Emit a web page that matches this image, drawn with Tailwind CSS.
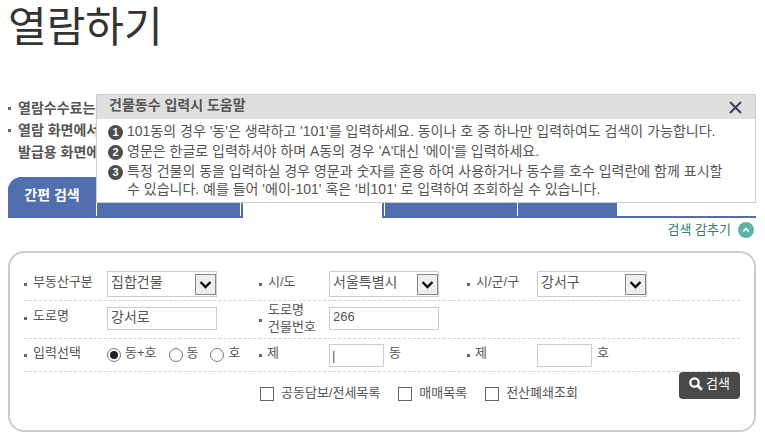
<!DOCTYPE html>
<html lang="ko">
  <head>
    <meta charset="UTF-8" />
    <meta name="viewport" content="width=device-width, initial-scale=1.0" />
    <script src="https://cdn.jsdelivr.net/npm/@tailwindcss/browser@4"></script>
    <title>열람하기</title>
  </head>
  <body
    class="bg-white pl-2 pr-[9px] pb-2 font-['Liberation_Sans','Noto_Sans_CJK_KR',sans-serif] text-[13px] leading-[18px] text-[#555]"
  >
    <h1 class="pt-[6px] text-[42px] leading-[44px] font-normal text-[#333]">열람하기</h1>

    <!-- Notice + tabs, with the help layer on top -->
    <section class="relative mt-11">
      <ul class="pt-[3px] text-[14px] leading-[22px] font-bold whitespace-nowrap">
        <li class="flex items-center gap-[7px]">
          <span class="size-[3px] bg-[#666]"></span>열람수수료는
        </li>
        <li class="flex items-center gap-[7px]">
          <span class="size-[3px] bg-[#666]"></span>열람 화면에서
        </li>
        <li class="pl-[10px]">발급용 화면에</li>
      </ul>

      <nav class="mt-[14px] flex h-[41px]">
        <div class="flex border-b-2 border-[#516fae] bg-[#516fae] rounded-tl-[14px]">
          <button class="w-[88px] rounded-t-[14px] bg-[#516fae] pb-1 text-[14px] font-bold text-white">
            간편 검색
          </button>
          <button class="w-[147px] border-l border-white" aria-label="소재지번으로 찾기">
            <span class="ml-auto mr-[2px] block h-full w-px bg-white"></span>
          </button>
        </div>
        <button class="w-[139px] bg-white" aria-label="도로명주소로 찾기"></button>
        <div class="flex flex-1 border-b-2 border-[#516fae]">
          <button class="w-[135px] bg-[#516fae] pl-[2px]" aria-label="고유번호로 찾기">
            <span class="block h-full w-px bg-white"></span>
          </button>
          <button class="w-[100px] border-l border-white bg-[#516fae]" aria-label="지도로 찾기"></button>
        </div>
      </nav>

      <!-- Help layer -->
      <div class="absolute top-0 right-0 left-[88px] border border-[#ccc] bg-white">
        <div class="flex h-6 items-center justify-between bg-[#dfdfdf] pr-[13px] pl-3">
          <h2 class="pb-1 text-[14px] font-bold">건물동수 입력시 도움말</h2>
          <button aria-label="닫기">
            <svg class="size-[13px]" viewBox="0 0 13 13" fill="none" stroke="#454358" stroke-width="2.2">
              <path d="M1 1 L12 12 M12 1 L1 12" />
            </svg>
          </button>
        </div>
        <ol class="flex flex-col gap-[2px] pt-[3px] pr-2 pb-[4px] pl-[11px] text-[14px] leading-[18px]">
          <li class="flex gap-[4px]">
            <span class="mt-[3px] size-[15px] shrink-0 rounded-full bg-[#4d4d4d] text-center text-[11px] leading-[15px] font-bold text-white">1</span>
            <p>101동의 경우 '동'은 생략하고 '101'를 입력하세요. 동이나 호 중 하나만 입력하여도 검색이 가능합니다.</p>
          </li>
          <li class="flex gap-[4px]">
            <span class="mt-[3px] size-[15px] shrink-0 rounded-full bg-[#4d4d4d] text-center text-[11px] leading-[15px] font-bold text-white">2</span>
            <p>영문은 한글로 입력하셔야 하며 A동의 경우 'A'대신 '에이'를 입력하세요.</p>
          </li>
          <li class="flex gap-[4px]">
            <span class="mt-[3px] size-[15px] shrink-0 rounded-full bg-[#4d4d4d] text-center text-[11px] leading-[15px] font-bold text-white">3</span>
            <p>
              특정 건물의 동을 입력하실 경우 영문과 숫자를 혼용 하여 사용하거나 동수를 호수 입력란에 함께 표시할<br />
              수 있습니다. 예를 들어 '에이-101' 혹은 '비101' 로 입력하여 조회하실 수 있습니다.
            </p>
          </li>
        </ol>
      </div>
    </section>

    <div class="flex justify-end pt-[3px] pr-[2px]">
      <button class="flex items-center gap-[7px] text-[#35806c]">
        검색 감추기
        <svg class="size-4" viewBox="0 0 16 16">
          <circle cx="8" cy="8" r="8" fill="#5cb3a6" />
          <path d="M5.2 9.3 L8 6.6 L10.8 9.3" fill="none" stroke="#fff" stroke-width="1.6" />
        </svg>
      </button>
    </div>

    <!-- Search form -->
    <form class="mt-3 rounded-2xl border-2 border-[#ccc] px-[14px] pt-[18px] pb-7">
      <div class="grid grid-cols-[83px_152px_70px_138px_70px_1fr] border-b border-dashed border-[#d5d5d5] pb-[3px]">
        <label for="kind" class="flex h-[22px] items-center gap-[6px]">
          <span class="mt-1 size-[3px] bg-[#666]"></span>부동산구분
        </label>
        <div class="relative w-[110px]">
          <select id="kind" class="block h-[26px] w-full appearance-none border border-[#ccc] bg-white pb-[4px] pl-[3px] text-[14px]">
            <option>집합건물</option>
          </select>
          <svg class="pointer-events-none absolute top-[3px] right-0 h-[21px] w-[22px]" viewBox="0 0 22 21">
            <rect x="0.5" y="0.5" width="20" height="20" fill="#eee" stroke="#888" />
            <path d="M5.5 8 L10.5 13 L15.5 8" fill="none" stroke="#111" stroke-width="2.4" />
          </svg>
        </div>
        <label for="sido" class="flex h-[22px] items-center gap-[6px]">
          <span class="mt-1 size-[3px] bg-[#666]"></span>시/도
        </label>
        <div class="relative w-[110px]">
          <select id="sido" class="block h-[26px] w-full appearance-none border border-[#ccc] bg-white pb-[4px] pl-[3px] text-[14px]">
            <option>서울특별시</option>
          </select>
          <svg class="pointer-events-none absolute top-[3px] right-0 h-[21px] w-[22px]" viewBox="0 0 22 21">
            <rect x="0.5" y="0.5" width="20" height="20" fill="#eee" stroke="#888" />
            <path d="M5.5 8 L10.5 13 L15.5 8" fill="none" stroke="#111" stroke-width="2.4" />
          </svg>
        </div>
        <label for="sigungu" class="flex h-[22px] items-center gap-[6px]">
          <span class="mt-1 size-[3px] bg-[#666]"></span>시/군/구
        </label>
        <div class="relative w-[110px]">
          <select id="sigungu" class="block h-[26px] w-full appearance-none border border-[#ccc] bg-white pb-[4px] pl-[3px] text-[14px]">
            <option>강서구</option>
          </select>
          <svg class="pointer-events-none absolute top-[3px] right-0 h-[21px] w-[22px]" viewBox="0 0 22 21">
            <rect x="0.5" y="0.5" width="20" height="20" fill="#eee" stroke="#888" />
            <path d="M5.5 8 L10.5 13 L15.5 8" fill="none" stroke="#111" stroke-width="2.4" />
          </svg>
        </div>
      </div>

      <div class="grid h-[38px] grid-cols-[83px_152px_70px_1fr] items-center border-b border-dashed border-[#d5d5d5] pb-1">
        <label for="road" class="mb-1 flex items-center gap-[6px]">
          <span class="mt-1 size-[3px] bg-[#666]"></span>도로명
        </label>
        <input id="road" type="text" value="강서로" class="h-[23px] w-[110px] border border-[#ccc] pb-1 pl-[3px] text-[14px]" />
        <label for="bldg" class="flex items-center gap-[6px]">
          <span class="mt-1 size-[3px] bg-[#666]"></span>
          <span class="leading-[17px] whitespace-nowrap">도로명<br />건물번호</span>
        </label>
        <input id="bldg" type="text" value="266" class="h-[23px] w-[110px] border border-[#ccc] pb-1 pl-[3px]" />
      </div>

      <div class="grid h-[33px] grid-cols-[83px_152px_70px_138px_70px_1fr] items-center border-b border-dashed border-[#d5d5d5]">
        <div id="mode" class="mb-1 flex items-center gap-[6px]">
          <span class="mt-1 size-[3px] bg-[#666]"></span>입력선택
        </div>
        <div role="radiogroup" aria-labelledby="mode" class="mb-1 flex items-center gap-3 whitespace-nowrap">
          <label class="flex items-center gap-1">
            <input type="radio" name="mode" checked class="mt-1 size-[14px] appearance-none rounded-full border border-[#777] bg-white bg-clip-content p-[2px] checked:bg-[#222]" />동+호
          </label>
          <label class="flex items-center gap-1">
            <input type="radio" name="mode" class="mt-1 size-[14px] appearance-none rounded-full border border-[#777] bg-white" />동
          </label>
          <label class="flex items-center gap-1">
            <input type="radio" name="mode" class="mt-1 size-[14px] appearance-none rounded-full border border-[#777] bg-white" />호
          </label>
        </div>
        <label for="dong" class="mb-1 flex items-center gap-[5px]">
          <span class="mt-1 size-[3px] bg-[#666]"></span>제
        </label>
        <div class="flex items-center gap-[5px]">
          <input id="dong" type="text" value="|" class="h-[23px] w-[55px] border border-[#ccc] pl-[2px]" />
          <span class="mb-1">동</span>
        </div>
        <label for="ho" class="mb-1 flex items-center gap-[5px]">
          <span class="mt-1 size-[3px] bg-[#666]"></span>제
        </label>
        <div class="flex items-center gap-[5px]">
          <input id="ho" type="text" class="h-[23px] w-[55px] border border-[#ccc] pl-[2px]" />
          <span class="mb-1">호</span>
        </div>
      </div>

      <div class="flex items-start">
        <div class="flex flex-1 gap-[18px] pt-3 pl-[236px] whitespace-nowrap">
          <label class="flex items-center gap-[7px]">
            <input type="checkbox" class="mt-[2px] size-[14px] appearance-none border border-[#666] bg-white" />공동담보/전세목록
          </label>
          <label class="flex items-center gap-[7px]">
            <input type="checkbox" class="mt-[2px] size-[14px] appearance-none border border-[#666] bg-white" />매매목록
          </label>
          <label class="flex items-center gap-[7px]">
            <input type="checkbox" class="mt-[2px] size-[14px] appearance-none border border-[#666] bg-white" />전산폐쇄조회
          </label>
        </div>
        <button type="button" class="flex h-[27px] w-[61px] items-center justify-center gap-[3px] rounded bg-[#494949] pb-1 text-white">
          <svg class="size-[14px]" viewBox="0 0 14 14" fill="none" stroke="#fff">
            <circle cx="5.5" cy="5.5" r="4.2" stroke-width="2.2" />
            <path d="M8.6 8.6 L12.8 12.8" stroke-width="2.8" />
          </svg>
          검색
        </button>
      </div>
    </form>
  </body>
</html>
